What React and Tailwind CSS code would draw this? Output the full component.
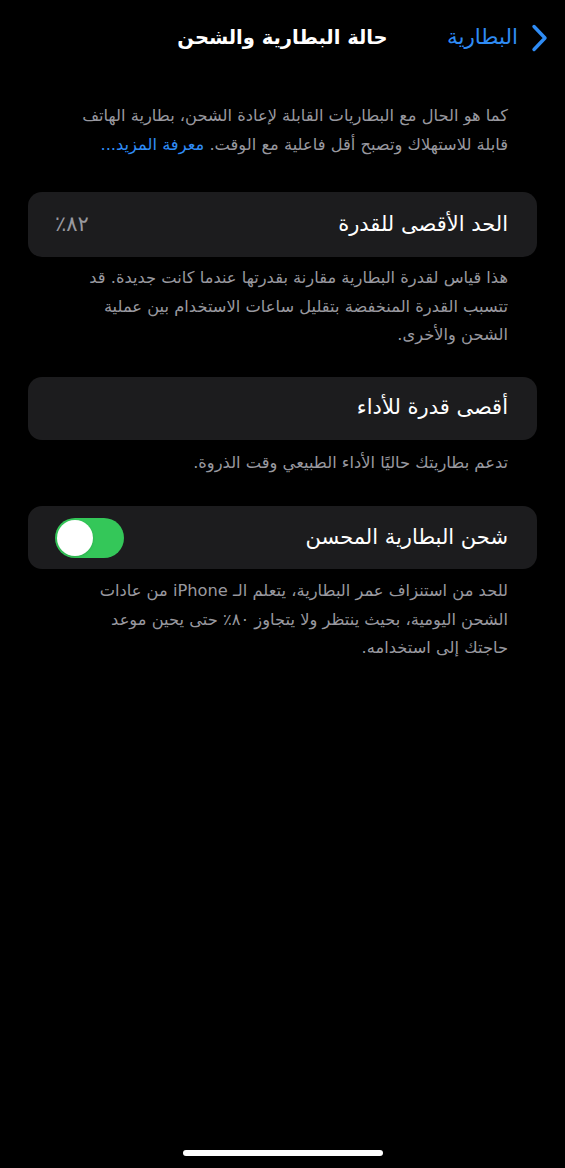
const Footer = ({ lines, pt = "pt-[8px]" }) => (
  <div className={`pr-[57px] pl-4 ${pt} text-[16.3px] leading-[28.5px] text-[#98989f]`}>
    {lines.map((l, i) => (
      <div key={i} className="whitespace-nowrap">
        {l}
      </div>
    ))}
  </div>
);

const Toggle = ({ on }) => (
  <div
    className={`w-[69px] h-[40px] rounded-full p-[2px] flex ${
      on ? "bg-[#34c759] justify-end" : "bg-[#39393d] justify-start"
    }`}
  >
    <div className="w-[36px] h-[36px] rounded-full bg-white shadow" />
  </div>
);

export default function App() {
  return (
    <div
      dir="rtl"
      className="w-[565px] h-[1168px] bg-black text-white font-['DejaVu_Sans',sans-serif] flex flex-col relative overflow-hidden"
    >
      {/* Nav bar */}
      <div className="h-[75px] flex items-center relative">
        <div className="flex items-center text-[#2f8cf5] pr-[16px] gap-[11px]">
          <svg width="20" height="30" viewBox="0 0 20 30">
            <path d="M5 3.5 L16 15 L5 26.5" fill="none" stroke="#2f8cf5" strokeWidth="3.4" strokeLinecap="round" strokeLinejoin="round" />
          </svg>
          <span className="text-[21.5px]">البطارية</span>
        </div>
        <div className="absolute inset-x-0 top-0 h-full flex items-center justify-center pointer-events-none">
          <span className="text-[19.5px] font-bold">حالة البطارية والشحن</span>
        </div>
      </div>

      {/* Intro */}
      <div className="pr-[57px] pt-[26px] text-[16.3px] leading-[29px] text-[#98989f]">
        <div className="whitespace-nowrap">كما هو الحال مع البطاريات القابلة لإعادة الشحن، بطارية الهاتف</div>
        <div className="whitespace-nowrap">
          قابلة للاستهلاك وتصبح أقل فاعلية مع الوقت. <span className="text-[#2f8cf5]">معرفة المزيد...</span>
        </div>
      </div>

      {/* Max capacity */}
      <div className="mx-[28px] mt-[33px] h-[65px] rounded-[14px] bg-[#1c1c1e] flex items-center justify-between pr-[29px] pl-[27px]">
        <span className="text-[21px]">الحد الأقصى للقدرة</span>
        <span className="text-[21px] text-[#98989f]">٨٢٪</span>
      </div>
      <Footer
        pt="pt-[7px]"
        lines={[
          "هذا قياس لقدرة البطارية مقارنة بقدرتها عندما كانت جديدة. قد",
          "تتسبب القدرة المنخفضة بتقليل ساعات الاستخدام بين عملية",
          "الشحن والأخرى.",
        ]}
      />

      {/* Peak performance */}
      <div className="mx-[28px] mt-[27px] h-[63px] rounded-[14px] bg-[#1c1c1e] flex items-center px-[29px]">
        <span className="text-[21px]">أقصى قدرة للأداء</span>
      </div>
      <Footer pt="pt-[9px]" lines={["تدعم بطاريتك حاليًا الأداء الطبيعي وقت الذروة."]} />

      {/* Optimized charging */}
      <div className="mx-[28px] mt-[29px] h-[63px] rounded-[14px] bg-[#1c1c1e] flex items-center justify-between pr-[29px] pl-[27px]">
        <span className="text-[21px]">شحن البطارية المحسن</span>
        <Toggle on />
      </div>
      <Footer
        lines={[
          "للحد من استنزاف عمر البطارية، يتعلم الـ iPhone من عادات",
          "الشحن اليومية، بحيث ينتظر ولا يتجاوز ٨٠٪ حتى يحين موعد",
          "حاجتك إلى استخدامه.",
        ]}
      />

      {/* Home indicator */}
      <div className="absolute bottom-[12px] left-0 right-0 flex justify-center">
        <div className="w-[200px] h-[6px] rounded-full bg-white" />
      </div>
    </div>
  );
}
